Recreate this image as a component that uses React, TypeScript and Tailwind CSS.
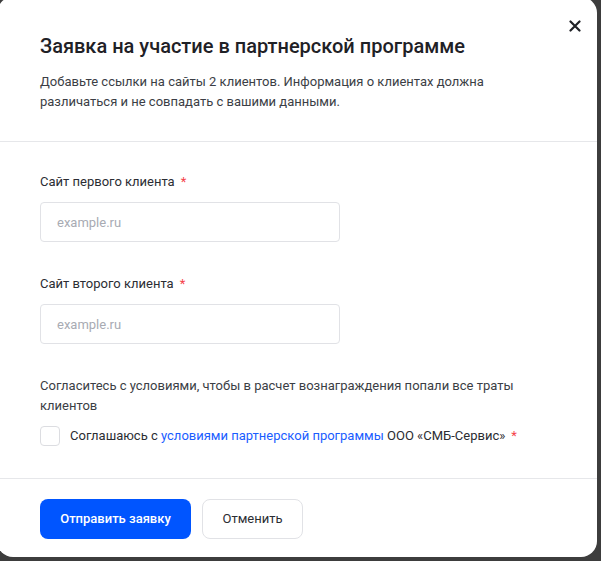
import * as React from "react"

const Star = () => <span className="ml-[6px] text-[#f5424b]">*</span>

const Field = ({ label }: { label: string }) => (
  <div className="flex flex-col">
    <label className="text-[13px] leading-5 text-[#2b2d33]">
      {label}
      <Star />
    </label>
    <input
      placeholder="example.ru"
      className="mt-[10px] h-10 w-[300px] rounded-[4px] border border-[#e1e2e6] px-4 text-[13px] text-[#2b2d33] outline-none placeholder:text-[#a8abb3]"
    />
  </div>
)

const App = () => {
  const [agreed, setAgreed] = React.useState(false)

  return (
    <div className="h-[561px] w-[601px] overflow-hidden bg-[#3d3d3d] font-['Roboto',sans-serif]">
      <div className="relative -ml-[3px] -mt-[3px] flex h-[560px] w-[600px] flex-col rounded-2xl bg-white">
        <button className="absolute right-[16px] top-[23px] flex h-3 w-3 items-center justify-center text-[#1f2126]">
          <svg width="12" height="12" viewBox="0 0 12 12" fill="none">
            <path d="M1.5 1.5L10.5 10.5M10.5 1.5L1.5 10.5" stroke="currentColor" strokeWidth="2.2" strokeLinecap="round" />
          </svg>
        </button>

        <div className="border-b border-[#e6e7ea] px-[43px] pb-[29px] pt-[35px]">
          <h2 className="text-[20px] font-medium leading-7 text-[#1f2126]">Заявка на участие в партнерской программе</h2>
          <p className="mt-3 w-[470px] text-[13px] leading-5 text-[#3b3e45]">
            Добавьте ссылки на сайты 2 клиентов. Информация о клиентах должна различаться и не совпадать с вашими данными.
          </p>
        </div>

        <div className="flex flex-col gap-8 border-b border-[#e6e7ea] px-[43px] pb-8 pt-[30px]">
          <Field label="Сайт первого клиента" />
          <Field label="Сайт второго клиента" />
          <div className="flex flex-col">
            <p className="w-[480px] text-[13px] leading-5 text-[#3b3e45]">
              Согласитесь с условиями, чтобы в расчет вознаграждения попали все траты клиентов
            </p>
            <label className="mt-[10px] flex cursor-pointer items-center gap-[10px] text-[13px] leading-5 text-[#2b2d33]">
              <input
                type="checkbox"
                checked={agreed}
                onChange={(e) => setAgreed(e.target.checked)}
                className="h-5 w-5 cursor-pointer appearance-none rounded-[4px] border border-[#dcdde1] bg-white checked:border-[#0055ff] checked:bg-[#0055ff]"
              />
              <span>
                Соглашаюсь с <a className="text-[#1a5dff]">условиями партнерской программы</a> ООО «СМБ-Сервис»
                <Star />
              </span>
            </label>
          </div>
        </div>

        <div className="flex gap-[11px] px-[43px] pt-5">
          <button className="h-10 w-[151px] rounded-lg bg-[#0055ff] text-[13px] font-medium text-white">Отправить заявку</button>
          <button className="h-10 w-[101px] rounded-lg border border-[#e1e2e6] bg-white text-[13px] text-[#2b2d33]">Отменить</button>
        </div>
      </div>
    </div>
  )
}

export default App
